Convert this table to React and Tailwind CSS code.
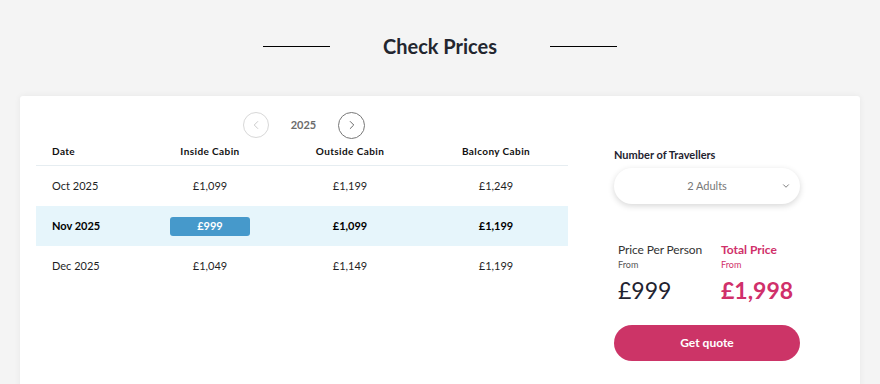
import { ChevronLeft, ChevronRight, ChevronDown } from 'lucide-react';

const rows = [
  { date: 'Oct 2025', inside: '£1,099', outside: '£1,199', balcony: '£1,249' },
  { date: 'Nov 2025', inside: '£999', outside: '£1,099', balcony: '£1,199', active: true },
  { date: 'Dec 2025', inside: '£1,049', outside: '£1,149', balcony: '£1,199' },
];

const cols = 'grid grid-cols-[114px_120px_160px_1fr] items-center';

const App = () => {
  return (
    <div className="min-h-screen bg-[#f4f4f4] font-['Lato',sans-serif] text-[#1f2330]">
      {/* Title */}
      <div className="flex items-start justify-center gap-[53px] pt-[32px] h-[96px]">
        <div className="w-[67px] h-px bg-black mt-[14px]"></div>
        <h2 className="text-[20px] font-bold text-[#23262f] leading-[28px]">Check Prices</h2>
        <div className="w-[67px] h-px bg-black mt-[14px]"></div>
      </div>

      <div className="mx-[20px] bg-white rounded-[3px] shadow-[0_0_6px_rgba(0,0,0,0.06)] h-[300px] flex">
        {/* Price table */}
        <div className="ml-[16px] w-[532px]">
          <div className="flex items-center justify-center gap-[22px] pt-[16px] h-[42px] pl-[4px]">
            <button className="w-[26px] h-[26px] rounded-full border border-[#d8d8d8] flex items-center justify-center text-[#c4c4c4]">
              <ChevronLeft size={14} strokeWidth={1.5} />
            </button>
            <span className="text-[11px] font-bold text-[#6b6b6b]">2025</span>
            <button className="w-[27px] h-[27px] rounded-full border border-[#777] flex items-center justify-center text-[#555]">
              <ChevronRight size={14} strokeWidth={1.5} />
            </button>
          </div>

          <div className={`${cols} h-[28px] border-b border-[#e6edf1] text-[10px] font-bold tracking-[0.04em] text-[#111]`}>
            <div className="pl-[16px]">Date</div>
            <div className="text-center">Inside Cabin</div>
            <div className="text-center">Outside Cabin</div>
            <div className="text-center pr-[6px]">Balcony Cabin</div>
          </div>

          {rows.map((r) => (
            <div
              key={r.date}
              className={`${cols} h-[40px] text-[11px] ${r.active ? 'bg-[#e6f5fb] font-bold text-black' : 'text-[#1f1f1f]'}`}
            >
              <div className="pl-[16px]">{r.date}</div>
              <div className="flex justify-center">
                {r.active ? (
                  <span className="w-[80px] h-[19px] rounded-[3px] bg-[#4699cb] text-white flex items-center justify-center">
                    {r.inside}
                  </span>
                ) : (
                  r.inside
                )}
              </div>
              <div className="text-center">{r.outside}</div>
              <div className="text-center pr-[6px]">{r.balcony}</div>
            </div>
          ))}
        </div>

        {/* Travellers + totals */}
        <div className="ml-[46px] w-[186px] pt-[52px]">
          <p className="text-[11px] font-bold text-[#1f2330] leading-[14px]">Number of Travellers</p>
          <div className="mt-[6px] h-[36px] rounded-full bg-white shadow-[0_2px_6px_rgba(0,0,0,0.16)] flex items-center relative">
            <span className="w-full text-center text-[11px] text-[#777]">2 Adults</span>
            <ChevronDown size={10} strokeWidth={2} className="absolute right-[9px] text-[#666]" />
          </div>

          <div className="mt-[38px] flex pl-[4px]">
            <div className="w-[103px]">
              <p className="text-[12px] tracking-[-0.01em] text-[#333] leading-[16px]">Price Per Person</p>
              <p className="text-[9px] text-[#555] leading-[12px] mt-[1px]">From</p>
              <p className="text-[23px] text-[#1f2330] leading-[30px] mt-[4px]">£999</p>
            </div>
            <div>
              <p className="text-[12px] font-bold text-[#d0306a] leading-[16px]">Total Price</p>
              <p className="text-[9px] text-[#d0306a] leading-[12px] mt-[1px]">From</p>
              <p className="text-[23px] font-bold text-[#d0306a] leading-[30px] mt-[4px]">£1,998</p>
            </div>
          </div>

          <button className="mt-[20px] w-full h-[36px] rounded-full bg-[#cc3467] text-white text-[12px] font-bold">
            Get quote
          </button>
        </div>
      </div>
    </div>
  );
};

export default App;
